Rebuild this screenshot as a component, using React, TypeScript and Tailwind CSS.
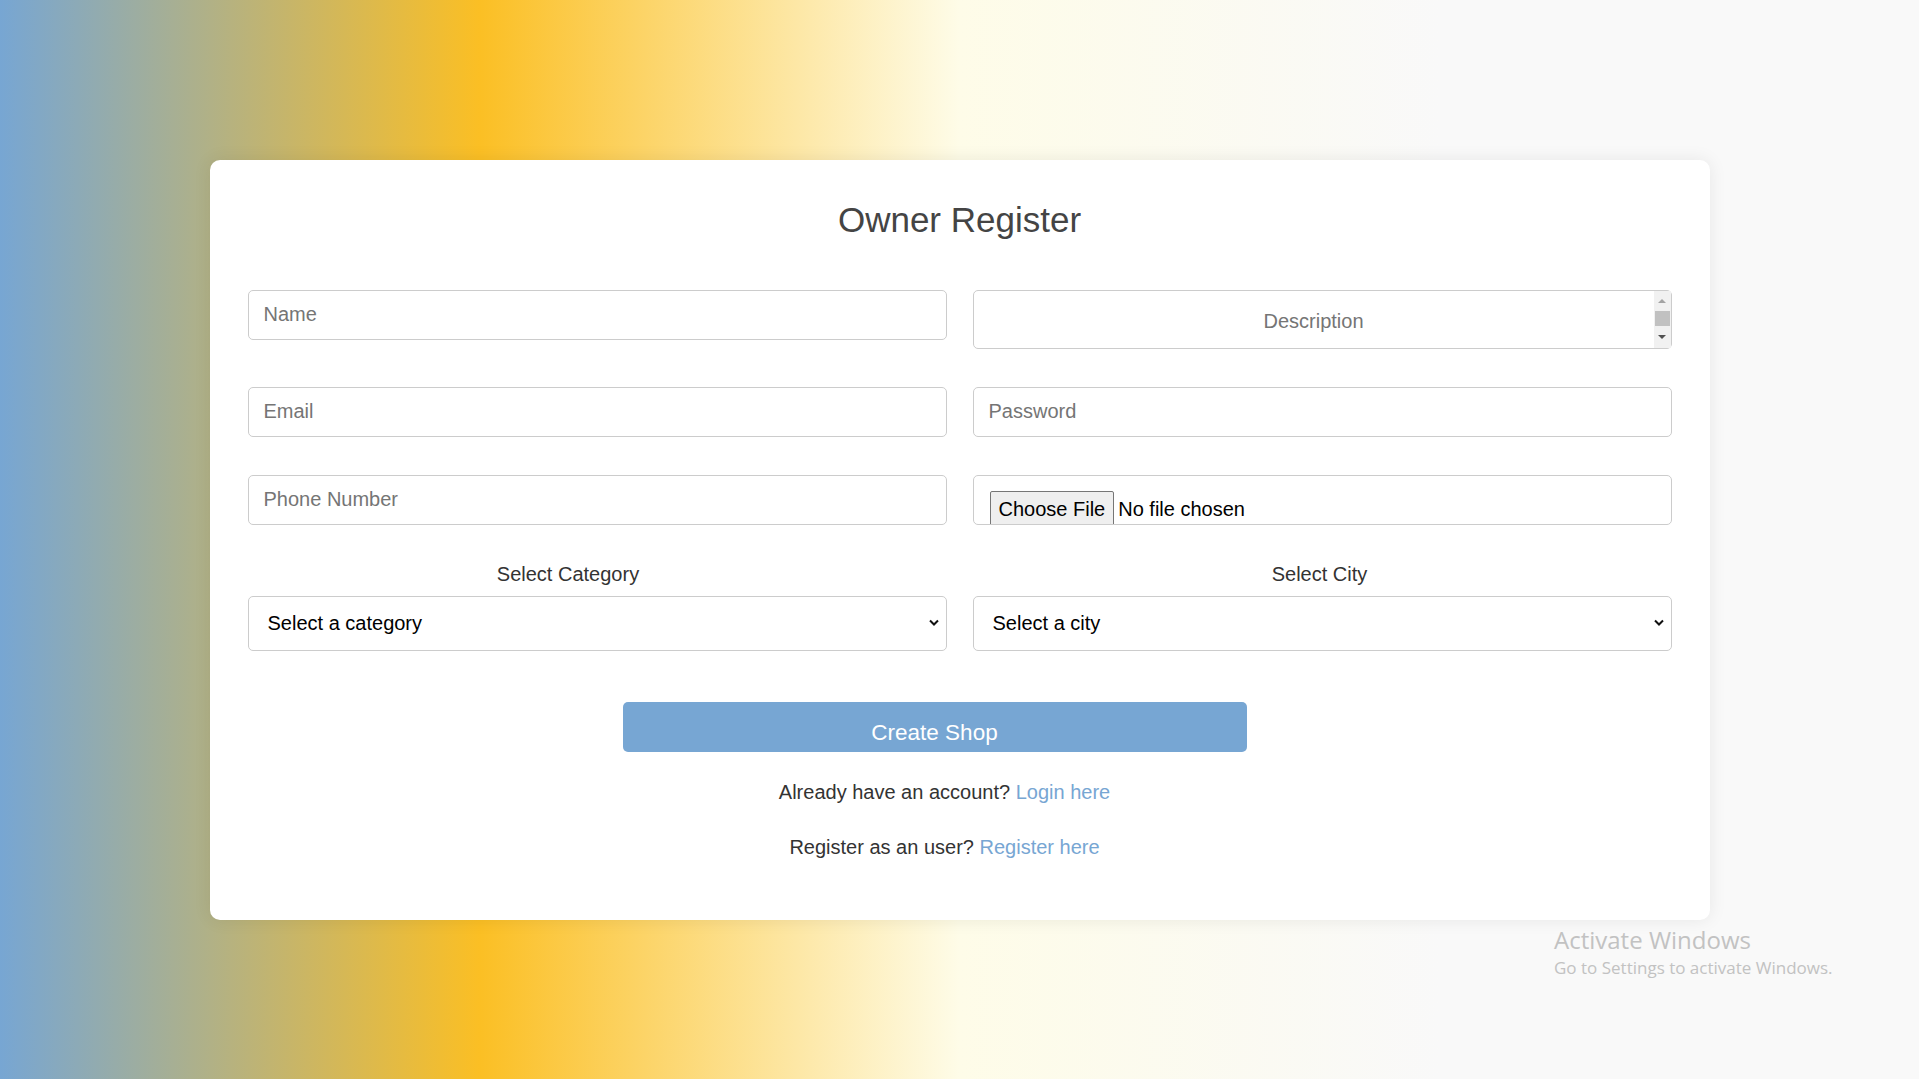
import { useState } from "react";

const inputBase =
  "w-full h-[50px] px-[15px] border border-[#cccccc] rounded-[5px] bg-white text-[20px] text-[#222] placeholder:text-[#757575] outline-none";

function SelectBox({ value, options }: { value: string; options: string[] }) {
  return (
    <div className="relative">
      <select
        defaultValue={value}
        className="w-full h-[55px] pl-[19px] pr-[40px] border border-[#cccccc] rounded-[5px] bg-white text-[20px] text-black appearance-none outline-none"
      >
        <option value={value}>{value}</option>
        {options.map((o) => (
          <option key={o}>{o}</option>
        ))}
      </select>
      {/* chevron drawn by hand, native one differs per OS */}
      <svg
        className="absolute right-[8px] top-[23px] pointer-events-none"
        width="10"
        height="7"
        viewBox="0 0 10 7"
      >
        <polyline points="1,1.5 5,5.5 9,1.5" fill="none" stroke="#111" strokeWidth="2" />
      </svg>
    </div>
  );
}

export default function App() {
  const [fileName] = useState<string | null>(null);

  return (
    <div className="relative min-h-screen flex items-center justify-center bg-[linear-gradient(to_right,#77a6d3_0%,#fbbf24_25%,#fefce8_50%,#f9f9f9_75%,#f9f9f9_100%)] font-['Liberation_Sans',Arial,sans-serif]">
      <div className="w-[1500px] bg-white rounded-[10px] shadow-[0_0_18px_rgba(0,0,0,0.08)] px-[38px] pt-[40px] pb-[61px]">
        <h1 className="text-center text-[35px] leading-[40px] text-[#444] font-normal mb-[50px]">
          Owner Register
        </h1>

        <form className="grid grid-cols-2 gap-x-[26px] gap-y-[38px] items-start">
          <input className={inputBase} placeholder="Name" />

          {/* Description textarea with the classic scrollbar look */}
          <div className="relative">
            <textarea
              rows={1}
              placeholder="Description"
              className="block w-full h-[59px] pt-[19px] pl-[15px] pr-[32px] border border-[#cccccc] rounded-[5px] bg-white text-[20px] leading-[23px] text-center text-[#222] placeholder:text-[#757575] outline-none resize-none overflow-hidden"
            />
            <div className="absolute right-px top-px bottom-px w-[17px] bg-[#f1f1f1] flex flex-col items-center">
              <div className="h-[20px] flex items-center justify-center">
                <div className="w-0 h-0 border-x-[4px] border-x-transparent border-b-[4px] border-b-[#a3a3a3]" />
              </div>
              <div className="w-[15px] h-[15px] bg-[#c1c1c1]" />
              <div className="flex-1 flex items-center justify-center">
                <div className="w-0 h-0 border-x-[4px] border-x-transparent border-t-[4px] border-t-[#505050]" />
              </div>
            </div>
          </div>

          <input className={inputBase} placeholder="Email" />
          <input className={inputBase} type="password" placeholder="Password" />

          <input className={inputBase} placeholder="Phone Number" />
          <div className="h-[50px] border border-[#cccccc] rounded-[5px] bg-white px-[16px] pt-[15px] overflow-hidden">
            <div className="flex items-center text-[20px] text-black">
              <span className="h-[37px] flex items-center px-[8px] bg-[#efefef] border border-[#767676] rounded-[2px]">
                Choose File
              </span>
              <span className="ml-[4px]">{fileName ?? "No file chosen"}</span>
            </div>
          </div>

          <div className="flex flex-col">
            <label className="text-center text-[20px] leading-[23px] text-[#333] pr-[58px] mb-[10px]">
              Select Category
            </label>
            <SelectBox value="Select a category" options={["Food", "Clothing", "Electronics"]} />
          </div>
          <div className="flex flex-col">
            <label className="text-center text-[20px] leading-[23px] text-[#333] pr-[5px] mb-[10px]">
              Select City
            </label>
            <SelectBox value="Select a city" options={["Algiers", "Oran", "Constantine"]} />
          </div>
        </form>

        <button className="mt-[51px] ml-[375px] w-[624px] h-[50px] pt-[12px] flex items-center justify-center bg-[#77a6d3] text-white text-[22.5px] rounded-[5px]">
          Create Shop
        </button>

        <div className="pr-[30px] text-center text-[20px] leading-[23px] text-[#333]">
          <p className="mt-[29px]">
            Already have an account? <a className="text-[#77a6d3]" href="#">Login here</a>
          </p>
          <p className="mt-[32px]">
            Register as an user? <a className="text-[#77a6d3]" href="#">Register here</a>
          </p>
        </div>
      </div>

      {/* OS watermark overlay */}
      <div className="absolute left-[1554px] top-[926px] text-[#c2c2c2] font-['Open_Sans','Noto_Sans',sans-serif] pointer-events-none">
        <div className="text-[24px] leading-[28px]">Activate Windows</div>
        <div className="text-[17px] leading-[22px] mt-[3px]">Go to Settings to activate Windows.</div>
      </div>
    </div>
  );
}
